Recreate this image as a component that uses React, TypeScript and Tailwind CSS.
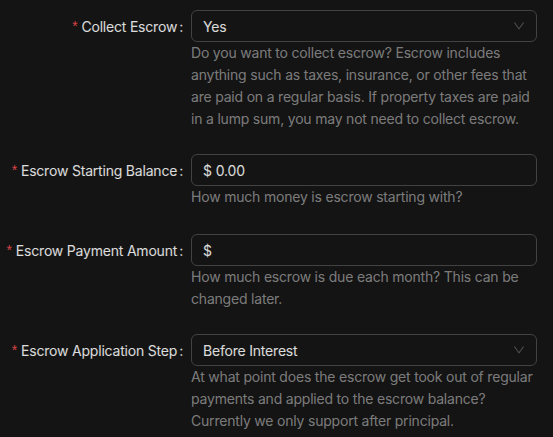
import type { ReactNode } from "react"

function DownIcon() {
  return (
    <svg viewBox="64 64 896 896" className="h-[12px] w-[12px]" fill="currentColor">
      <path d="M884 256h-75c-5.1 0-9.9 2.5-12.9 6.6L512 654.2 227.9 262.6c-3-4.1-7.8-6.6-12.9-6.6h-75c-6.5 0-10.3 7.4-6.5 12.1l352.6 486.1c12.8 17.6 39 17.6 51.7 0l352.6-486.1c3.9-4.7.1-12.1-6.4-12.1z" />
    </svg>
  )
}

function FormItem({ label, help, children }: { label: string; help: string; children: ReactNode }) {
  return (
    <div className="flex mb-[24px]">
      <div className="w-[191px] shrink-0 h-[32px] flex items-center justify-end">
        <span className="text-[#dc4446] text-[14px] mr-[4px] leading-none font-['SimSun','Liberation_Sans',sans-serif]">*</span>
        <span className="text-[14px] text-white/85">{label}</span>
        <span className="text-[14px] text-white/85 ml-[2px] mr-[8px]">:</span>
      </div>
      <div className="flex-1 min-w-0 pr-[16px]">
        {children}
        <div className="min-h-[24px] text-[14px] leading-[22px] text-white/45">{help}</div>
      </div>
    </div>
  )
}

function Select({ value }: { value: string }) {
  return (
    <div className="h-[32px] rounded-[6px] border border-[#424242] px-[11px] flex items-center justify-between">
      <span className="text-[14px] text-white/85">{value}</span>
      <span className="text-white/25 flex items-center"><DownIcon /></span>
    </div>
  )
}

function Input({ prefix, value }: { prefix: string; value: string }) {
  return (
    <div className="h-[32px] rounded-[6px] border border-[#424242] px-[11px] flex items-center">
      <span className="text-[14px] text-white/85 mr-[4px]">{prefix}</span>
      <span className="text-[14px] text-white/85">{value}</span>
    </div>
  )
}

export default function App() {
  return (
    <div className="min-h-screen bg-[#141414] pt-[10px] font-['Inter',sans-serif] tracking-[-0.2px]">
      <FormItem
        label="Collect Escrow"
        help="Do you want to collect escrow? Escrow includes anything such as taxes, insurance, or other fees that are paid on a regular basis. If property taxes are paid in a lump sum, you may not need to collect escrow."
      >
        <Select value="Yes" />
      </FormItem>
      <FormItem label="Escrow Starting Balance" help="How much money is escrow starting with?">
        <Input prefix="$" value="0.00" />
      </FormItem>
      <FormItem label="Escrow Payment Amount" help="How much escrow is due each month? This can be changed later.">
        <Input prefix="$" value="" />
      </FormItem>
      <FormItem
        label="Escrow Application Step"
        help="At what point does the escrow get took out of regular payments and applied to the escrow balance? Currently we only support after principal."
      >
        <Select value="Before Interest" />
      </FormItem>
    </div>
  )
}
